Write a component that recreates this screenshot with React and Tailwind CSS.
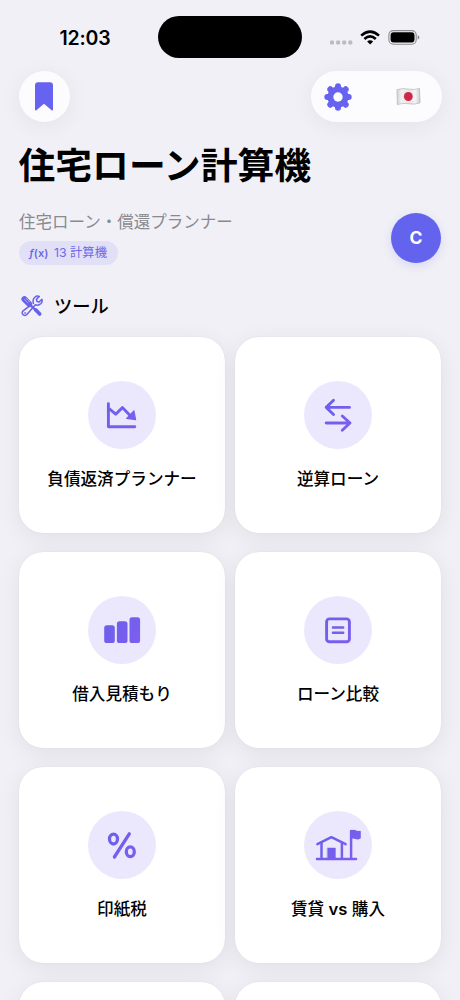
const tools = [
  { label: '負債返済プランナー', icon: DebtIcon },
  { label: '逆算ローン', icon: ReverseIcon },
  { label: '借入見積もり', icon: BarsIcon },
  { label: 'ローン比較', icon: CompareIcon },
  { label: '印紙税', icon: PercentIcon },
  { label: <>賃貸 <span className="font-semibold">vs</span> 購入</>, icon: HouseIcon },
  { label: '', icon: null },
  { label: '', icon: null },
]

function Gradient({ id }) {
  return (
    <defs>
      <linearGradient id={id} gradientUnits="userSpaceOnUse" x1="18" y1="18" x2="50" y2="50">
        <stop offset="0" stopColor="#6861ea" />
        <stop offset="1" stopColor="#805df0" />
      </linearGradient>
    </defs>
  )
}

function DebtIcon() {
  return (
    <svg viewBox="0 0 68 68" className="size-[68px]" fill="none" stroke="url(#g-debt)" strokeWidth="2.9" strokeLinecap="round" strokeLinejoin="round">
      <Gradient id="g-debt" />
      <path d="M20.4 22.8V45.7H46.8" />
      <path d="M21 27.5L27.7 33.2L34.4 26.6L42.5 35" strokeLinecap="butt" />
      <path d="M45.9 29.8L47.6 38.7L38.7 37.3Z" fill="url(#g-debt)" strokeWidth="1.2" />
    </svg>
  )
}

function ReverseIcon() {
  return (
    <svg viewBox="0 0 68 68" className="size-[68px]" fill="none" stroke="url(#g-rev)" strokeWidth="2.9" strokeLinecap="round" strokeLinejoin="round">
      <Gradient id="g-rev" />
      <path d="M45.5 26.4H22.2M29.5 19.3L22.2 26.4L29.5 33.5" />
      <path d="M22.2 42H46M38.3 35L46 42L38.3 49.2" />
    </svg>
  )
}

function BarsIcon() {
  return (
    <svg viewBox="0 0 68 68" className="size-[68px]" fill="url(#g-bars)">
      <Gradient id="g-bars" />
      <rect x="16.2" y="29.3" width="10.6" height="17.8" rx="2.6" />
      <rect x="28.9" y="25.3" width="10.6" height="21.8" rx="2.6" />
      <rect x="41.5" y="21.3" width="10.6" height="25.8" rx="2.6" />
    </svg>
  )
}

function CompareIcon() {
  return (
    <svg viewBox="0 0 68 68" className="size-[68px]" fill="none" stroke="url(#g-cmp)" strokeWidth="2.9" strokeLinecap="round">
      <Gradient id="g-cmp" />
      <rect x="22.6" y="22.9" width="22.8" height="22.8" rx="2.8" />
      <path d="M28.9 31.5H39.2M28.9 36.8H39.2" strokeWidth="2.4" />
    </svg>
  )
}

function PercentIcon() {
  return (
    <svg viewBox="0 0 68 68" className="size-[68px]" fill="none" stroke="url(#g-pct)" strokeWidth="3.3" strokeLinecap="round">
      <Gradient id="g-pct" />
      <ellipse cx="25.5" cy="28.1" rx="4" ry="4.9" />
      <ellipse cx="42.3" cy="40.7" rx="4" ry="4.9" />
      <path d="M41.3 22.8L26.4 46" />
    </svg>
  )
}

function HouseIcon() {
  return (
    <svg viewBox="0 0 68 68" className="size-[68px]" fill="none" stroke="url(#g-house)" strokeWidth="2.5" strokeLinecap="round" strokeLinejoin="round">
      <Gradient id="g-house" />
      <path d="M13 47.9H52" />
      <path d="M13.4 33.2L27.4 26.2L41.6 33.2" />
      <path d="M17.5 32V47.5M37.9 32V47.5M47.1 20V47.5" />
      <path d="M23.6 37H31.4V47.5H23.6Z" fill="url(#g-house)" strokeWidth="0.5" />
      <path d="M47.1 20Q50 19.2 52 20.3Q54 21.2 56 20.5V26.8Q54 28.2 51.5 27.2Q49.5 26.4 47.1 27Z" fill="url(#g-house)" strokeWidth="1.6" />
    </svg>
  )
}

function BookmarkIcon() {
  return (
    <svg viewBox="0 0 18 29" className="w-[18px] h-[29px]" fill="#6762f0">
      <path d="M3 0.3H15Q18 0.3 18 3.3V27.3Q18 29.4 16.3 28L9 21.8L1.7 28Q0 29.4 0 27.3V3.3Q0 0.3 3 0.3Z" />
    </svg>
  )
}

function GearIcon() {
  return (
    <svg viewBox="-14 -14 28 28" className="size-[28px]">
      <g stroke="#6762f0" strokeWidth="6" strokeLinecap="round">
        <path d="M0 -10.7V10.7M-10.7 0H10.7M-7.7 -7.7L7.7 7.7M-7.7 7.7L7.7 -7.7" />
      </g>
      <circle r="10.6" fill="#6762f0" />
      <circle r="4.7" fill="#fcfcff" />
    </svg>
  )
}

function FlagIcon() {
  return (
    <svg viewBox="0 0 25 19" className="w-[25px] h-[19px]">
      <defs>
        <linearGradient id="flag" x1="0" x2="1" y1="0" y2="0">
          <stop offset="0" stopColor="#d2d2d4" />
          <stop offset="0.2" stopColor="#f1f1f2" />
          <stop offset="0.55" stopColor="#e5e5e6" />
          <stop offset="0.8" stopColor="#f3f3f3" />
          <stop offset="1" stopColor="#cacacc" />
        </linearGradient>
      </defs>
      <path d="M1 2.7Q6.5 0.8 12.5 2.1Q18.5 3.2 23.5 1.4L24.1 15.8Q18.5 18 12.5 16.7Q6.5 15.7 1.3 17.6Z" fill="url(#flag)" stroke="#b5b5b8" strokeWidth="0.7" />
      <ellipse cx="12.3" cy="9.5" rx="4.4" ry="4.6" fill="#cf2748" />
    </svg>
  )
}

function ToolsIcon() {
  return (
    <svg viewBox="0 0 22 22" className="size-[22px]" fill="none" stroke="#6762e8" strokeLinecap="round" strokeLinejoin="round">
      <path d="M12.4 8.3Q11.3 4.4 13.8 2.2Q16 0.3 18.3 1.5L15.4 4.4L16 6.5L18.1 7L20.9 4.2Q21.8 6.8 19.7 8.8Q17.5 10.8 14.3 9.8L6.1 19.2Q4.4 21.2 2.3 19.9Q0.1 17.9 2.1 15.9L9.3 10.3" strokeWidth="1.5" />
      <path d="M3.4 4.1L8.2 9" strokeWidth="6" />
      <path d="M3.4 4.2L7 7.9M5.2 3.2L8.7 6.8" stroke="#b9b6f4" strokeWidth="0.8" />
      <path d="M9.6 10.2L14.8 15.4" strokeWidth="2.3" />
      <path d="M14.8 15L18.7 19" strokeWidth="3.7" />
      <circle cx="4" cy="18" r="0.6" strokeWidth="0.7" />
    </svg>
  )
}

function StatusIcons() {
  return (
    <svg viewBox="0 0 90 16" className="w-[90px] h-[16px]">
      <g fill="#bcbbc0">
        <rect x="0" y="10.6" width="4" height="3.8" rx="1.2" />
        <rect x="6.1" y="10.6" width="4" height="3.8" rx="1.2" />
        <rect x="12.2" y="10.6" width="4" height="3.8" rx="1.2" />
        <rect x="18.3" y="10.6" width="4" height="3.8" rx="1.2" />
      </g>
      <g fill="none" stroke="#000" strokeWidth="2.6">
        <path d="M31.2 5.6Q40.1 -2.5 49 5.6" />
        <path d="M34.4 9Q40.1 3.9 45.8 9" />
      </g>
      <path d="M37.1 11.4Q40.1 9 43.1 11.4L40.1 14.5Z" fill="#000" />
      <rect x="58.9" y="0.6" width="27.3" height="13.6" rx="4.4" fill="none" stroke="#8c8c90" strokeWidth="1.1" />
      <rect x="60.6" y="2.3" width="23.9" height="10.2" rx="2.9" fill="#000" />
      <path d="M87.7 5.3Q89.4 5.9 89.4 7.4Q89.4 8.9 87.7 9.5Z" fill="#8c8c90" />
    </svg>
  )
}

function StatusBar() {
  return (
    <div className="flex h-[71px] items-start pt-4">
      <div className="w-[158px] pl-[59.5px] pt-[8px] text-[19.5px] leading-7 font-semibold font-['Inter',sans-serif] tracking-[-0.2px]">
        12:03
      </div>
      <div className="h-[42px] w-[144px] rounded-full bg-black" />
      <div className="pl-[28px] pt-[14px]">
        <StatusIcons />
      </div>
    </div>
  )
}

function ToolCard({ label, icon: Icon }) {
  return (
    <div className="flex h-[196px] flex-col items-center rounded-[24px] bg-white pt-[44.5px] shadow-[0_5px_24px_rgba(0,0,0,0.07),0_0_1px_rgba(0,0,0,0.12)]">
      {Icon && (
        <div className="size-[68px] rounded-full bg-[#ebe8fe]">
          <Icon />
        </div>
      )}
      <div className="mt-[17px] text-[16.6px] leading-[26px] font-medium whitespace-nowrap">{label}</div>
    </div>
  )
}

export default function App() {
  return (
    <div className="h-[1000px] w-[460px] overflow-hidden bg-[#f1f0f6] text-black font-['Inter','Noto_Sans_CJK_JP',sans-serif]">
      <StatusBar />
      <header className="flex items-center justify-between px-[18.5px]">
        <div className="flex size-[51px] items-center justify-center rounded-full bg-[#fcfcff] shadow-[0_4px_24px_rgba(0,0,0,0.06)]">
          <BookmarkIcon />
        </div>
        <div className="flex h-[51px] w-[131px] items-center justify-between rounded-full bg-[#fcfcff] pr-[21px] pl-[13.5px] shadow-[0_4px_24px_rgba(0,0,0,0.06)]">
          <GearIcon />
          <FlagIcon />
        </div>
      </header>

      <h1 className="mt-[18px] px-[18.5px] text-[36.8px] leading-[52px] font-bold whitespace-nowrap">住宅ローン計算機</h1>

      <div className="mt-[17px] flex items-center justify-between px-[19px]">
        <div>
          <p className="text-[16.5px] leading-[26px] text-[#89898e] whitespace-nowrap">住宅ローン・償還プランナー</p>
          <div className="mt-[6px] flex h-[24px] w-[99px] items-center rounded-full bg-[#e1e0f7] pt-px pl-[10px] text-[#6e69e6]">
            <span className="w-[25px] text-[11px] font-semibold whitespace-nowrap">
              <i>ƒ</i>(x)
            </span>
            <span className="text-[12.3px] whitespace-nowrap">13 計算機</span>
          </div>
        </div>
        <div className="mt-[1px] flex size-[50px] items-center justify-center rounded-full bg-[#6463ee] pt-[2px] text-[17.5px] font-bold text-white shadow-[0_3px_10px_rgba(99,99,240,0.18)]">
          C
        </div>
      </div>

      <div className="mt-[26.5px] flex h-[28px] items-center px-[21px]">
        <ToolsIcon />
        <h2 className="ml-[11px] text-[18.3px] leading-[28px] font-medium">ツール</h2>
      </div>

      <main className="mt-[17px] grid grid-cols-2 gap-x-[10px] gap-y-[19px] px-[19px]">
        {tools.map((tool, i) => (
          <ToolCard key={i} {...tool} />
        ))}
      </main>
    </div>
  )
}
